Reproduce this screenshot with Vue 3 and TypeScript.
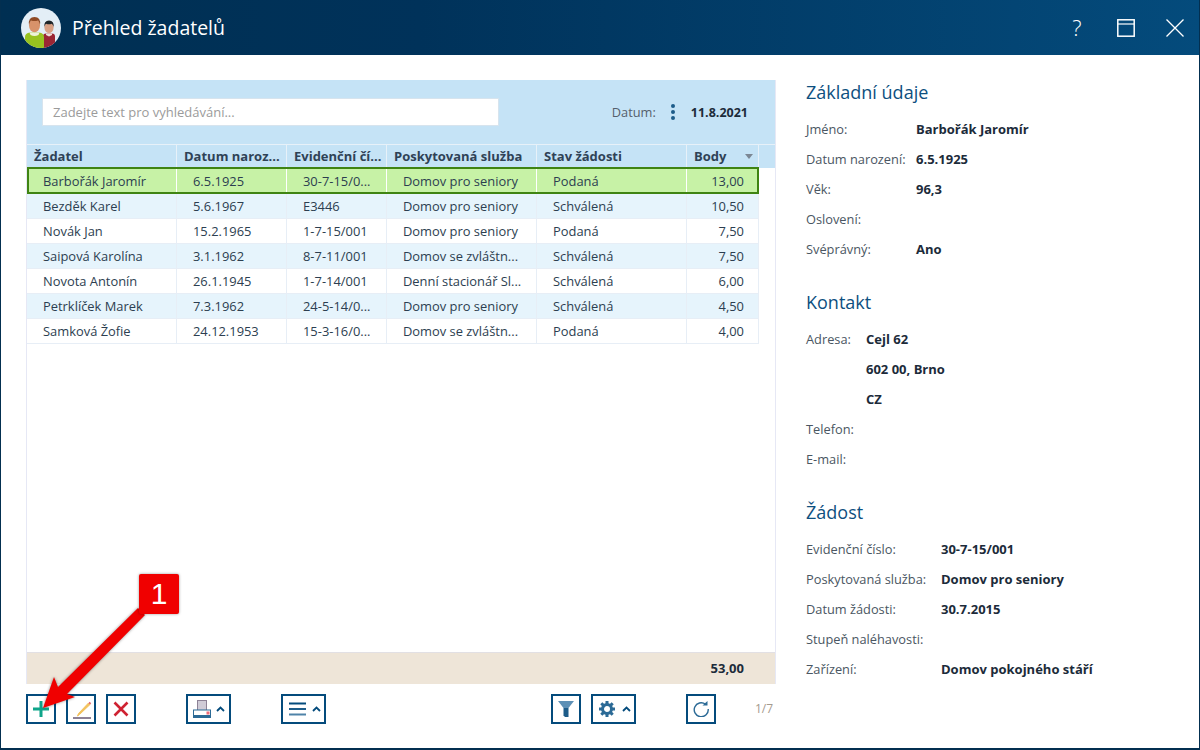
<script setup lang="ts">
interface Row { name: string; born: string; ev: string; service: string; state: string; pts: string }
const rows: Row[] = [
  { name: 'Barbořák Jaromír', born: '6.5.1925', ev: '30-7-15/0...', service: 'Domov pro seniory', state: 'Podaná', pts: '13,00' },
  { name: 'Bezděk Karel', born: '5.6.1967', ev: 'E3446', service: 'Domov pro seniory', state: 'Schválená', pts: '10,50' },
  { name: 'Novák Jan', born: '15.2.1965', ev: '1-7-15/001', service: 'Domov pro seniory', state: 'Podaná', pts: '7,50' },
  { name: 'Saipová Karolína', born: '3.1.1962', ev: '8-7-11/001', service: 'Domov se zvláštn...', state: 'Schválená', pts: '7,50' },
  { name: 'Novota Antonín', born: '26.1.1945', ev: '1-7-14/001', service: 'Denní stacionář Sl...', state: 'Schválená', pts: '6,00' },
  { name: 'Petrklíček Marek', born: '7.3.1962', ev: '24-5-14/0...', service: 'Domov pro seniory', state: 'Schválená', pts: '4,50' },
  { name: 'Samková Žofie', born: '24.12.1953', ev: '15-3-16/0...', service: 'Domov se zvláštn...', state: 'Podaná', pts: '4,00' },
]
const sections = [
  { title: 'Základní údaje', cls: 'w110', items: [['Jméno:', 'Barbořák Jaromír'], ['Datum narození:', '6.5.1925'], ['Věk:', '96,3'], ['Oslovení:', ''], ['Svéprávný:', 'Ano']] },
  { title: 'Kontakt', cls: 'w60', items: [['Adresa:', 'Cejl 62'], ['', '602 00, Brno'], ['', 'CZ'], ['Telefon:', ''], ['E-mail:', '']] },
  { title: 'Žádost', cls: 'w135', items: [['Evidenční číslo:', '30-7-15/001'], ['Poskytovaná služba:', 'Domov pro seniory'], ['Datum žádosti:', '30.7.2015'], ['Stupeň naléhavosti:', ''], ['Zařízení:', 'Domov pokojného stáří']] },
]
</script>

<template>
  <div class="win">
    <header class="bar">
      <svg class="avatar" width="40" height="40" viewBox="0 0 40 40">
        <defs><clipPath id="c"><circle cx="20" cy="20" r="20" /></clipPath></defs>
        <g clip-path="url(#c)">
          <rect width="40" height="40" fill="#e3eef6" />
          <path d="M22 40V28q0-2.500 3-2.500h6q3 0 3 3V40z" fill="#9a2634" />
          <path d="M25 25.500h6v1.500l-3 1.500-3-1.500z" fill="#efe0d6" />
          <ellipse cx="28" cy="19.500" rx="4.600" ry="5.600" fill="#d8a084" />
          <path d="M23.300 19q-.5-6.500 4.700-6.500t4.700 6.500q-1-3-2-3.200-2.700 1-5.600 0-1 .5-1.800 3.200z" fill="#1e2428" />
          <path d="M4 40V29q0-4 5-4.500h9q5 .5 5 4.500v11z" fill="#98c21f" />
          <path d="M8.500 24.500h10l-1 2.500q-4 2-8 0z" fill="#eef2d8" />
          <ellipse cx="13.500" cy="17.500" rx="5.500" ry="6.800" fill="#d8926a" />
          <path d="M8 17q-1-8 5.500-8t5.500 8q-.8-3.500-2-4.500-3.500 1-7 0-1.200 1-2 4.500z" fill="#8f4a24" />
        </g>
      </svg>
      <span class="title">Přehled žadatelů</span>
      <span class="help">?</span>
      <svg class="ctl" width="18" height="18" viewBox="0 0 18 18" fill="none" stroke="#fff">
        <rect x=".8" y=".8" width="16.400" height="16.400" stroke-width="1.500" />
        <path d="M.8 5h16.400" stroke-width="1.200" />
      </svg>
      <svg class="ctl close" width="18" height="18" viewBox="0 0 18 18" fill="none" stroke="#fff" stroke-width="1.300">
        <path d="M.5.500l17 17M17.500.500l-17 17" />
      </svg>
    </header>

    <main class="body">
      <section class="left">
        <div class="panel">
          <div class="search">
            <div class="input">Zadejte text pro vyhledávání...</div>
            <span class="dlabel">Datum:</span>
            <span class="dots"><i></i><i></i><i></i></span>
            <b class="dval">11.8.2021</b>
          </div>
          <div class="grid head">
            <div class="th">Žadatel</div>
            <div class="th">Datum naroz...</div>
            <div class="th">Evidenční čí...</div>
            <div class="th">Poskytovaná služba</div>
            <div class="th">Stav žádosti</div>
            <div class="th">Body<span class="sort"></span></div>
            <div class="th blank"></div>
          </div>
          <div class="rows">
            <div v-for="(r, i) in rows" :key="r.name" class="grid row" :class="{ sel: i === 0, alt: i % 2 === 1 }">
              <div class="td">{{ r.name }}</div>
              <div class="td">{{ r.born }}</div>
              <div class="td">{{ r.ev }}</div>
              <div class="td">{{ r.service }}</div>
              <div class="td">{{ r.state }}</div>
              <div class="td num">{{ r.pts }}</div>
            </div>
          </div>
          <div class="sum"><b>53,00</b></div>
        </div>

        <div class="tools">
          <button class="btn">
            <svg width="16" height="16" viewBox="0 0 16 16"><path d="M8 0v16M0 8h16" stroke="#0fa58a" stroke-width="3" /></svg>
          </button>
          <button class="btn g10">
            <svg class="pen" width="20" height="20" viewBox="0 0 20 20">
              <path d="M6.500 15.500L4.500 17l1-2.500L15.500 4l1.500 1.500z" fill="#f3c25d" stroke="#f3c25d" />
              <path d="M15.500 4l1.200-1.200 1.500 1.500L17 5.500z" fill="#e2616a" />
              <path d="M0 19h18" stroke="#8d8296" stroke-width="2" />
            </svg>
          </button>
          <button class="btn g10">
            <svg width="16" height="16" viewBox="0 0 16 16"><path d="M1.500 1.500l13 13M14.500 1.500l-13 13" stroke="#cf2232" stroke-width="2.600" /></svg>
          </button>
          <button class="btn wide g50 print">
            <svg width="18" height="18" viewBox="0 0 18 18">
              <rect x="4.500" y=".5" width="9" height="10" fill="#cfcbd6" stroke="#8d8296" />
              <rect x=".5" y="10" width="17" height="7.500" fill="#fff" stroke="#2b6a96" />
              <rect x="0" y="15" width="18" height="3" fill="#2b6a96" />
              <rect x="13.500" y="11.500" width="3" height="3" fill="#ee6a78" />
            </svg>
            <svg class="caret" width="9" height="6" viewBox="0 0 9 6"><path d="M1 5l3.500-3.500L8 5" fill="none" stroke="#044b7c" stroke-width="1.800" /></svg>
          </button>
          <button class="btn wide g50 menu">
            <svg width="17" height="14" viewBox="0 0 17 14"><path d="M0 1.500h17" stroke="#044b7c" stroke-width="2" /><path d="M0 7h17" stroke="#1d5c89" stroke-width="2" /><path d="M0 12.500h17" stroke="#4f83a8" stroke-width="2" /></svg>
            <svg class="caret" width="9" height="6" viewBox="0 0 9 6"><path d="M1 5l3.500-3.500L8 5" fill="none" stroke="#044b7c" stroke-width="1.800" /></svg>
          </button>
          <span class="spring"></span>
          <button class="btn">
            <svg width="16" height="16" viewBox="0 0 16 16"><path d="M0 0h16l-5.500 7H5.500z" fill="#5d90b6" /><path d="M5.500 7h5v9H7l-1.500-1.500z" fill="#1d5c89" /></svg>
          </button>
          <button class="btn wide g10 gear">
            <svg width="16" height="16" viewBox="0 0 16 16">
              <circle cx="8" cy="8" r="4.500" fill="none" stroke="#2b6a96" stroke-width="3" />
              <path d="M8 0v3M8 13v3M0 8h3M13 8h3M2.300 2.300l2.100 2.100M11.600 11.600l2.100 2.100M13.700 2.300l-2.100 2.100M4.400 11.600l-2.100 2.100" stroke="#2b6a96" stroke-width="3" />
            </svg>
            <svg class="caret" width="9" height="6" viewBox="0 0 9 6"><path d="M1 5l3.500-3.500L8 5" fill="none" stroke="#044b7c" stroke-width="1.800" /></svg>
          </button>
          <button class="btn g50">
            <svg width="16" height="16" viewBox="0 0 16 16" fill="none"><path d="M12.500 3.200A7 7 0 1 0 15.200 8" stroke="#2b6a96" stroke-width="1.400" /><path d="M9.500 4.500h5V0z" fill="#2b6a96" /></svg>
          </button>
          <span class="pager">1/7</span>
        </div>
      </section>

      <aside class="right">
        <section v-for="s in sections" :key="s.title" class="sec">
          <h2>{{ s.title }}</h2>
          <div v-for="(it, i) in s.items" :key="i" class="kv">
            <span :class="s.cls">{{ it[0] }}</span><b>{{ it[1] }}</b>
          </div>
        </section>
      </aside>
    </main>

    <div class="callout">1</div>
    <svg class="arrow" width="150" height="130" viewBox="0 0 150 130">
      <path d="M21 118L32 87 36 97 116 18 123 25 45 104 53 107z" fill="#f00000" />
    </svg>
  </div>
</template>

<style>
html, body { margin: 0; }
</style>

<style scoped>
.win { position: relative; width: 1200px; height: 750px; box-sizing: border-box; background: #fff; font-family: "Open Sans", sans-serif; font-size: 13px; color: #2c3e50; border: solid #032f50; border-width: 0 1px 2px 1px; overflow: hidden; display: flex; flex-direction: column; }
.bar { height: 55px; margin: 0 -1px; flex: none; display: flex; align-items: center; padding-left: 21px; background: linear-gradient(90deg, #002f52 0%, #00325a 35%, #044b7c 100%); color: #fff; }
.avatar { flex: none; }
.title { margin-left: 11px; font-size: 19.500px; flex: 1; }
.help { font-size: 22px; font-weight: 300; width: 20px; text-align: center; margin-right: 30px; margin-top: -2px; }
.ctl { flex: none; }
.close { margin: 0 16px 0 31px; }
.body { flex: 1; display: flex; min-height: 0; padding: 25px 0 0 25px; }
.left { width: 750px; flex: none; display: flex; flex-direction: column; }
.panel { height: 604px; flex: none; display: flex; flex-direction: column; border: solid #e6e8f5; border-width: 0 1px 0 1px; box-sizing: border-box; }
.search { height: 64px; flex: none; background: #c5e3f6; display: flex; align-items: center; padding: 0 27px 0 15px; }
.input { background: #fff; border: 1px solid #d7e4ee; padding-left: 10px; color: #9b9b9b; width: 445px; height: 26px; line-height: 26px; }
.dlabel { margin-left: auto; color: #555f6c; font-size: 12.800px; }
.dots { display: flex; flex-direction: column; gap: 2px; margin: 0 16px 0 15px; }
.dots i { width: 4px; height: 4px; border-radius: 50%; background: #1d5c89; }
.dval { font-weight: 700; color: #1c2b3a; font-size: 12.500px; }
.grid { display: grid; grid-template-columns: 150px 110px 100px 150px 150px 72px; }
.head { height: 24px; grid-template-columns: 150px 110px 100px 150px 150px 72px 1fr; background: #c5e3f6; }
.th { border-top: 1px solid #e7f1f9; border-right: 1px solid #e7f1f9; padding: 0 7px; font-weight: 700; color: #2f4256; line-height: 23px; position: relative; white-space: nowrap; }
.th.blank { border-right: 0; }
.sort { position: absolute; right: 5px; top: 9px; border: 4px solid transparent; border-top: 5px solid #7b8794; border-bottom: 0; }
.rows { flex: 1; min-height: 0; }
.row { height: 25px; width: 732px; box-sizing: border-box; }
.td { padding-left: 16px; line-height: 24px; border-right: 1px solid #e7eef6; border-bottom: 1px solid #e7eef6; white-space: nowrap; overflow: hidden; font-size: 12.900px; }
.td:last-child { padding: 0 14px 0 0; text-align: right; }
.alt { background: #e6f4fc; }
.sel { background: #c7f2a6; height: 27px; margin-top: -1px; position: relative; outline: 2px solid #3f8412; outline-offset: -2px; }
.sel .td { border-right-color: #fff; border-bottom-color: transparent; line-height: 29px; }
.sum { height: 32px; flex: none; background: #eee5d8; border-top: 1px solid #e2e0e4; box-sizing: border-box; text-align: right; padding-right: 31px; line-height: 31px; color: #1c2b3a; }
.tools { display: flex; margin-top: 10px; }
.btn { width: 30px; height: 30px; padding: 0; box-sizing: border-box; background: #fff; border: 2px solid #044b7c; display: flex; align-items: center; justify-content: center; flex: none; }
.wide { width: 45px; justify-content: flex-start; }
.print { padding-left: 5px; gap: 5px; }
.menu { padding-left: 6px; gap: 6px; }
.gear { padding-left: 6px; gap: 7px; }
.g10 { margin-left: 10px; }
.g50 { margin-left: 50px; }
.pen { margin-left: 4px; margin-top: -1px; }
.caret { flex: none; }
.spring { flex: 1; }
.pager { width: 60px; text-align: right; padding-right: 3px; box-sizing: border-box; line-height: 30px; color: #a59a8e; font-size: 12px; }
.right { flex: 1; padding-left: 30px; }
.sec { height: 210px; }
h2 { margin: 0; font-size: 18px; font-weight: 400; color: #0d4f80; height: 24px; line-height: 24px; padding-bottom: 10px; }
.kv { height: 30px; line-height: 30px; display: flex; color: #4a5662; font-size: 12.800px; white-space: nowrap; }
.kv b { color: #1c2b3a; font-weight: 700; font-size: 13px; }
.w110 { width: 110px; }
.w60 { width: 60px; }
.w135 { width: 135px; }
.callout { position: absolute; left: 138px; top: 574px; width: 40px; height: 40px; background: #f00000; border-radius: 2px; color: #fff; font-family: "Liberation Sans", sans-serif; font-size: 30px; line-height: 40px; text-align: center; box-shadow: 0 0 3px rgba(0,0,0,.4); z-index: 1; }
.arrow { position: absolute; left: 21px; top: 590px; filter: drop-shadow(0 0 1.500px rgba(0,0,0,.45)); }
</style>
